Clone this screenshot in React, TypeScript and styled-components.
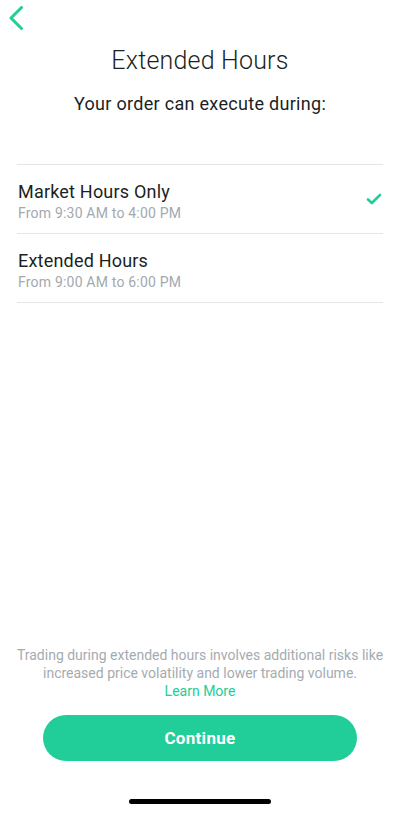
import React from 'react';
import styled, { createGlobalStyle } from 'styled-components';

const GlobalStyle = createGlobalStyle`
  html, body {
    margin: 0;
    padding: 0;
    background: #ffffff;
  }
  body {
    font-family: Roboto, "Liberation Sans", sans-serif;
    -webkit-font-smoothing: antialiased;
  }
`;

const Screen = styled.div`
  width: 400px;
  height: 813px;
  display: flex;
  flex-direction: column;
  background: #ffffff;
  color: #1b1f23;
`;

const NavBar = styled.div`
  height: 36px;
  padding: 6px 0 0 9px;
  box-sizing: border-box;
`;

const BackButton = styled.button`
  border: none;
  background: none;
  padding: 0;
  width: 16px;
  height: 24px;
  display: flex;
  cursor: pointer;
`;

const Title = styled.h1`
  margin: 10px 0 0;
  text-align: center;
  font-size: 25px;
  font-weight: 300;
  line-height: 30px;
  letter-spacing: 0.2px;
`;

const Subtitle = styled.h2`
  margin: 17px 0 0;
  text-align: center;
  font-size: 18px;
  font-weight: 400;
  line-height: 22px;
  letter-spacing: 0.3px;
`;

const OptionList = styled.ul`
  list-style: none;
  margin: 49px 17px 0;
  padding: 0;
  border-top: 1px solid #e3e5e8;
`;

const OptionRow = styled.li`
  box-sizing: border-box;
  height: 69px;
  display: flex;
  align-items: center;
  border-bottom: 1px solid #e3e5e8;
  padding: 0 1px;
`;

const OptionText = styled.div`
  flex: 1;
  display: flex;
  flex-direction: column;
  gap: 2px;
  padding-top: 5px;
`;

const OptionName = styled.span`
  font-size: 18px;
  line-height: 20px;
  letter-spacing: 0.2px;
`;

const OptionHours = styled.span`
  font-size: 14px;
  line-height: 18px;
  color: #a3a9ae;
  letter-spacing: 0.2px;
`;

const Spacer = styled.div`
  flex: 1;
`;

const Disclaimer = styled.p`
  margin: 0 8px;
  text-align: center;
  font-size: 14px;
  line-height: 18px;
  color: #a5abb0;
  letter-spacing: 0;
`;

const LearnMore = styled.a`
  color: #21ce99;
  text-decoration: none;
`;

const ContinueButton = styled.button`
  margin: 15px 43px 0;
  height: 46px;
  border: none;
  border-radius: 23px;
  background: #21ce99;
  color: #ffffff;
  font-family: inherit;
  font-size: 17px;
  font-weight: 700;
  letter-spacing: 0.3px;
  cursor: pointer;
`;

const HomeBar = styled.div`
  display: flex;
  justify-content: center;
  padding: 38px 0 9px;
`;

const HomeIndicator = styled.div`
  width: 142px;
  height: 5px;
  border-radius: 3px;
  background: #000000;
`;

const ChevronLeft = () => (
  <svg width="16" height="24" viewBox="0 0 16 24" fill="none">
    <path d="M12.5 1.5 L2 12 L12.5 22.5" stroke="#21ce99" strokeWidth="3" strokeLinecap="round" strokeLinejoin="round" />
  </svg>
);

const Check = () => (
  <svg width="16" height="12" viewBox="0 0 16 12" fill="none">
    <path d="M2 6.5 L5.8 10 L14 2" stroke="#21ce99" strokeWidth="2.6" strokeLinecap="round" strokeLinejoin="round" />
  </svg>
);

const options = [
  { name: 'Market Hours Only', hours: 'From 9:30 AM to 4:00 PM', selected: true },
  { name: 'Extended Hours', hours: 'From 9:00 AM to 6:00 PM', selected: false },
];

export default function App() {
  return (
    <Screen>
      <GlobalStyle />
      <NavBar>
        <BackButton aria-label="Back">
          <ChevronLeft />
        </BackButton>
      </NavBar>
      <Title>Extended Hours</Title>
      <Subtitle>Your order can execute during:</Subtitle>
      <OptionList>
        {options.map((opt) => (
          <OptionRow key={opt.name}>
            <OptionText>
              <OptionName>{opt.name}</OptionName>
              <OptionHours>{opt.hours}</OptionHours>
            </OptionText>
            {opt.selected && <Check />}
          </OptionRow>
        ))}
      </OptionList>
      <Spacer />
      <Disclaimer>
        Trading during extended hours involves additional risks like
        <br />
        increased price volatility and lower trading volume.
        <br />
        <LearnMore href="#">Learn More</LearnMore>
      </Disclaimer>
      <ContinueButton>Continue</ContinueButton>
      <HomeBar>
        <HomeIndicator />
      </HomeBar>
    </Screen>
  );
}
